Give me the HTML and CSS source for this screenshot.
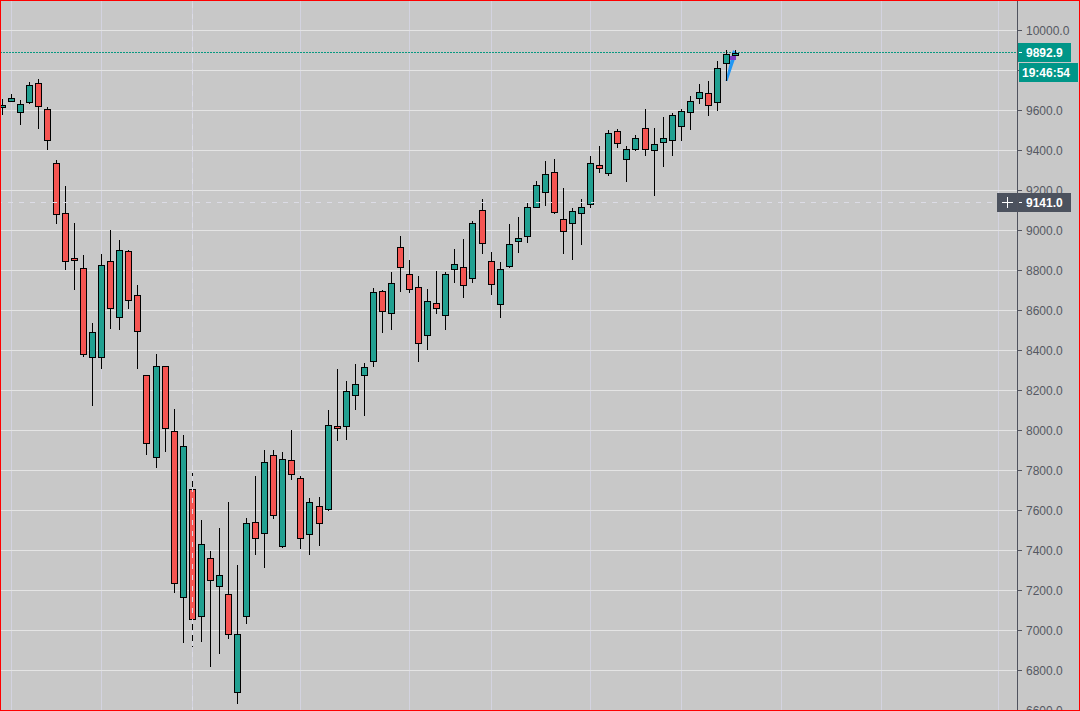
FILE: index.html
```html
<!DOCTYPE html>
<html lang="en">
<head>
<meta charset="utf-8">
<title>Candlestick chart</title>
<link rel="stylesheet" href="styles.css">
</head>
<body>
<main class="frame">
  <section class="pane">
    <svg class="plot" width="1016" height="709" viewBox="1 1 1016 709" xmlns="http://www.w3.org/2000/svg">
      <path class="grid-v" d="M11.5 0V711M101.5 0V711M192.5 0V711M300.5 0V711M409.5 0V711M491.5 0V711M590.5 0V711M681.5 0V711M781.5 0V711M881.5 0V711M998.5 0V711"/>
      <path class="grid-h" d="M0 30.5H1017M0 70.5H1017M0 110.5H1017M0 150.5H1017M0 190.5H1017M0 230.5H1017M0 270.5H1017M0 310.5H1017M0 350.5H1017M0 390.5H1017M0 430.5H1017M0 470.5H1017M0 510.5H1017M0 550.5H1017M0 590.5H1017M0 630.5H1017M0 670.5H1017M0 710.5H1017"/>
      <path class="last-price" d="M0 52.5H1017"/>
      <polygon class="drawing-blue" points="725.5,81 727.5,81 737,53 733,50"/>
      <rect class="drawing-purple" x="729" y="56" width="7" height="4"/>
      <path class="wick" d="M2.5 99V115M11.5 94V98M20.5 100V125M29.5 82V104M38.5 79V129M47.5 107V150M56.5 160V224M65.5 186V270M74.5 223V290M83.5 255V357M92.5 323V406M101.5 254V369M110.5 230V329M119.5 240V330M128.5 250V309M137.5 285V369M146.5 375V455M156.5 354V468M165.5 366V452M174.5 409V593M183.5 435V643M192.5 473V647M201.5 520V642M210.5 551V667M219.5 528V654M228.5 502V639M237.5 565V704M246.5 518V624M255.5 476V555M264.5 450V568M273.5 450V519M282.5 452V548M291.5 430V480M300.5 476V549M309.5 498V555M319.5 497V546M328.5 410V511M337.5 369V441M346.5 381V440M355.5 364V410M364.5 363V416M373.5 288V367M382.5 290V333M391.5 272V330M400.5 236V292M409.5 260V293M418.5 276V362M427.5 289V350M436.5 271V314M445.5 272V330M454.5 249V283M463.5 239V298M472.5 221V283M482.5 199V254M491.5 252V295M500.5 262V318M509.5 224V268M518.5 217V253M527.5 203V243M536.5 181V208M545.5 161V206M554.5 159V214M563.5 188V254M572.5 208V260M581.5 199V245M590.5 156V208M599.5 146V173M608.5 130V176M617.5 129V148M626.5 146V182M635.5 135V151M645.5 109V156M654.5 128V196M663.5 117V167M672.5 113V156M681.5 109V141M690.5 96V130M699.5 84V104M708.5 81V116M717.5 61V111M726.5 50V81M735.5 50V56"/>
      <rect class="up" x="-0.5" y="105.5" width="6" height="2"/>
      <rect class="up" x="8.5" y="98.5" width="6" height="3"/>
      <rect class="up" x="17.5" y="104.5" width="6" height="8"/>
      <rect class="up" x="26.5" y="85.5" width="6" height="17"/>
      <rect class="down" x="35.5" y="83.5" width="6" height="23"/>
      <rect class="down" x="44.5" y="109.5" width="6" height="31"/>
      <rect class="down" x="53.5" y="163.5" width="6" height="51"/>
      <rect class="down" x="62.5" y="213.5" width="6" height="48"/>
      <rect class="down" x="71.5" y="258.5" width="6" height="2"/>
      <rect class="down" x="80.5" y="268.5" width="6" height="86"/>
      <rect class="up" x="89.5" y="332.5" width="6" height="25"/>
      <rect class="up" x="98.5" y="265.5" width="6" height="92"/>
      <rect class="down" x="107.5" y="261.5" width="6" height="47"/>
      <rect class="up" x="116.5" y="250.5" width="6" height="67"/>
      <rect class="down" x="125.5" y="251.5" width="6" height="49"/>
      <rect class="down" x="134.5" y="295.5" width="6" height="36"/>
      <rect class="down" x="143.5" y="375.5" width="6" height="68"/>
      <rect class="up" x="153.5" y="366.5" width="6" height="91"/>
      <rect class="down" x="162.5" y="366.5" width="6" height="62"/>
      <rect class="down" x="171.5" y="431.5" width="6" height="152"/>
      <rect class="up" x="180.5" y="446.5" width="6" height="151"/>
      <rect class="down" x="189.5" y="489.5" width="6" height="130"/>
      <rect class="up" x="198.5" y="544.5" width="6" height="72"/>
      <rect class="down" x="207.5" y="558.5" width="6" height="22"/>
      <rect class="up" x="216.5" y="575.5" width="6" height="11"/>
      <rect class="down" x="225.5" y="594.5" width="6" height="40"/>
      <rect class="up" x="234.5" y="634.5" width="6" height="58"/>
      <rect class="up" x="243.5" y="523.5" width="6" height="93"/>
      <rect class="down" x="252.5" y="522.5" width="6" height="16"/>
      <rect class="up" x="261.5" y="462.5" width="6" height="71"/>
      <rect class="down" x="270.5" y="455.5" width="6" height="60"/>
      <rect class="up" x="279.5" y="459.5" width="6" height="87"/>
      <rect class="down" x="288.5" y="460.5" width="6" height="14"/>
      <rect class="down" x="297.5" y="478.5" width="6" height="60"/>
      <rect class="up" x="306.5" y="502.5" width="6" height="32"/>
      <rect class="down" x="316.5" y="506.5" width="6" height="17"/>
      <rect class="up" x="325.5" y="425.5" width="6" height="84"/>
      <rect class="down" x="334.5" y="426.5" width="6" height="2"/>
      <rect class="up" x="343.5" y="391.5" width="6" height="35"/>
      <rect class="up" x="352.5" y="384.5" width="6" height="11"/>
      <rect class="up" x="361.5" y="367.5" width="6" height="8"/>
      <rect class="up" x="370.5" y="292.5" width="6" height="69"/>
      <rect class="down" x="379.5" y="291.5" width="6" height="20"/>
      <rect class="up" x="388.5" y="283.5" width="6" height="30"/>
      <rect class="down" x="397.5" y="247.5" width="6" height="20"/>
      <rect class="down" x="406.5" y="274.5" width="6" height="15"/>
      <rect class="down" x="415.5" y="287.5" width="6" height="56"/>
      <rect class="up" x="424.5" y="301.5" width="6" height="34"/>
      <rect class="down" x="433.5" y="303.5" width="6" height="5"/>
      <rect class="up" x="442.5" y="274.5" width="6" height="41"/>
      <rect class="up" x="451.5" y="264.5" width="6" height="5"/>
      <rect class="down" x="460.5" y="267.5" width="6" height="18"/>
      <rect class="up" x="469.5" y="223.5" width="6" height="55"/>
      <rect class="down" x="479.5" y="210.5" width="6" height="33"/>
      <rect class="down" x="488.5" y="261.5" width="6" height="23"/>
      <rect class="up" x="497.5" y="269.5" width="6" height="35"/>
      <rect class="up" x="506.5" y="244.5" width="6" height="22"/>
      <rect class="up" x="515.5" y="238.5" width="6" height="3"/>
      <rect class="up" x="524.5" y="207.5" width="6" height="29"/>
      <rect class="up" x="533.5" y="185.5" width="6" height="22"/>
      <rect class="up" x="542.5" y="174.5" width="6" height="18"/>
      <rect class="down" x="551.5" y="172.5" width="6" height="40"/>
      <rect class="down" x="560.5" y="219.5" width="6" height="12"/>
      <rect class="up" x="569.5" y="211.5" width="6" height="12"/>
      <rect class="up" x="578.5" y="207.5" width="6" height="6"/>
      <rect class="up" x="587.5" y="163.5" width="6" height="41"/>
      <rect class="down" x="596.5" y="165.5" width="6" height="3"/>
      <rect class="up" x="605.5" y="133.5" width="6" height="40"/>
      <rect class="down" x="614.5" y="131.5" width="6" height="12"/>
      <rect class="up" x="623.5" y="149.5" width="6" height="10"/>
      <rect class="up" x="632.5" y="138.5" width="6" height="11"/>
      <rect class="down" x="642.5" y="128.5" width="6" height="21"/>
      <rect class="up" x="651.5" y="144.5" width="6" height="6"/>
      <rect class="up" x="660.5" y="138.5" width="6" height="4"/>
      <rect class="up" x="669.5" y="115.5" width="6" height="25"/>
      <rect class="up" x="678.5" y="111.5" width="6" height="15"/>
      <rect class="up" x="687.5" y="101.5" width="6" height="11"/>
      <rect class="up" x="696.5" y="92.5" width="6" height="6"/>
      <rect class="down" x="705.5" y="93.5" width="6" height="12"/>
      <rect class="up" x="714.5" y="68.5" width="6" height="34"/>
      <rect class="up" x="723.5" y="54.5" width="6" height="9"/>
      <rect class="up" x="732.5" y="53.5" width="6" height="2"/>
      <path class="crosshair" d="M192.5 3V711M-3 202.5H997"/>
    </svg>
    <div class="cursor-box">
      <svg class="cursor-plus" width="11" height="11" viewBox="0 0 11 11" xmlns="http://www.w3.org/2000/svg"><path d="M0 5.5H11M5.5 0V11"/></svg>
    </div>
  </section>
  <aside class="axis">
    <div class="tick">10000.0</div>
    <div class="tick"></div>
    <div class="tick">9600.0</div>
    <div class="tick">9400.0</div>
    <div class="tick">9200.0</div>
    <div class="tick">9000.0</div>
    <div class="tick">8800.0</div>
    <div class="tick">8600.0</div>
    <div class="tick">8400.0</div>
    <div class="tick">8200.0</div>
    <div class="tick">8000.0</div>
    <div class="tick">7800.0</div>
    <div class="tick">7600.0</div>
    <div class="tick">7400.0</div>
    <div class="tick">7200.0</div>
    <div class="tick">7000.0</div>
    <div class="tick">6800.0</div>
    <div class="tick">6600.0</div>
    <div class="badge badge-price">9892.9</div>
    <div class="badge badge-time">19:46:54</div>
    <div class="badge badge-cross">9141.0</div>
  </aside>
</main>
</body>
</html>
```

FILE: styles.css
```css
* {
  box-sizing: border-box;
}

html,
body {
  margin: 0;
  height: 100%;
  background: #c8c8c8;
}

.frame {
  display: flex;
  width: 1080px;
  height: 711px;
  border: 1px solid #ff0000;
  background: #c8c8c8;
  overflow: hidden;
  font-family: "Liberation Sans", Arial, sans-serif;
  font-size: 12px;
}

.pane {
  position: relative;
  flex: 0 0 1016px;
  height: 709px;
}

.plot {
  display: block;
}

.grid-v {
  fill: none;
  stroke: #d3d3e0;
  stroke-width: 1;
}

.grid-h {
  fill: none;
  stroke: #e4e4e4;
  stroke-width: 1;
}

.last-price {
  fill: none;
  stroke: #089981;
  stroke-width: 1;
  stroke-dasharray: 2 1;
}

.drawing-blue {
  fill: #2196f3;
}

.drawing-purple {
  fill: #7e3cc4;
}

.wick {
  fill: none;
  stroke: #000000;
  stroke-width: 1;
}

.up,
.down {
  stroke: #000000;
  stroke-width: 1;
}

.up {
  fill: #22a091;
}

.down {
  fill: #f55552;
}

.crosshair {
  fill: none;
  stroke: #dcdce6;
  stroke-width: 1;
  stroke-dasharray: 5 6;
}

.cursor-box {
  position: absolute;
  right: 0;
  top: 192px;
  display: flex;
  align-items: center;
  justify-content: center;
  width: 20px;
  height: 19px;
  background: #4c525e;
}

.cursor-plus {
  display: block;
  fill: none;
  stroke: #ffffff;
  stroke-width: 1;
}

.axis {
  position: relative;
  display: flex;
  flex-direction: column;
  flex: 1;
  padding-top: 9px;
  border-left: 1px solid #50535e;
  color: #555862;
  white-space: nowrap;
}

.tick {
  position: relative;
  display: flex;
  flex: 0 0 40px;
  align-items: center;
  padding: 2px 0 0 8px;
  height: 40px;
}

.tick::before {
  content: "";
  position: absolute;
  left: 0;
  top: 20px;
  width: 4px;
  height: 1px;
  background: #50535e;
}

.badge {
  position: absolute;
  display: flex;
  align-items: center;
  height: 19px;
  font-weight: 700;
  color: #ffffff;
}

.badge-price {
  left: 0;
  top: 42px;
  width: 53px;
  padding-left: 8px;
  background: #009688;
}

.badge-time {
  left: 1px;
  top: 62px;
  width: 59px;
  padding-left: 3px;
  background: #009688;
}

.badge-cross {
  left: 0;
  top: 192px;
  width: 53px;
  padding-left: 8px;
  background: #4c525e;
}

.badge-price::before,
.badge-cross::before {
  content: "";
  position: absolute;
  left: 1px;
  top: 9px;
  width: 3px;
  height: 1px;
  background: #ffffff;
}
```
